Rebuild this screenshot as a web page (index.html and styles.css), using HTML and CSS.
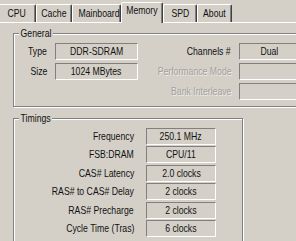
FILE: index.html
```html
<!DOCTYPE html>
<html lang="en">
<head>
  <meta charset="UTF-8">
  <title>CPU-Z Memory</title>
  <link rel="stylesheet" href="styles.css">
</head>
<body>
  <div class="window">
    <div class="tabs">
      <div class="tab tab-cpu"><span class="t">CPU</span></div>
      <div class="tab tab-cache"><span class="t">Cache</span></div>
      <div class="tab tab-mainboard"><span class="t">Mainboard</span></div>
      <div class="tab tab-memory active"><span class="t">Memory</span></div>
      <div class="tab tab-spd"><span class="t">SPD</span></div>
      <div class="tab tab-about"><span class="t">About</span></div>
    </div>

    <div class="page">
      <div class="group general">
        <span class="group-title"><span class="t">General</span></span>
        <div class="general-grid">
          <span class="label"><span class="t">Type</span></span>
          <span class="field"><span class="t">DDR-SDRAM</span></span>
          <span class="label"><span class="t">Channels #</span></span>
          <span class="field"><span class="t">Dual</span></span>

          <span class="label"><span class="t">Size</span></span>
          <span class="field"><span class="t">1024 MBytes</span></span>
          <span class="label disabled"><span class="t">Performance Mode</span></span>
          <span class="field"></span>

          <span></span>
          <span></span>
          <span class="label disabled"><span class="t">Bank Interleave</span></span>
          <span class="field"></span>
        </div>
      </div>

      <div class="group timings">
        <span class="group-title"><span class="t">Timings</span></span>
        <div class="timings-grid">
          <span class="label"><span class="t">Frequency</span></span>
          <span class="field"><span class="t">250.1 MHz</span></span>
          <span class="label"><span class="t">FSB:DRAM</span></span>
          <span class="field"><span class="t">CPU/11</span></span>
          <span class="label"><span class="t">CAS# Latency</span></span>
          <span class="field"><span class="t">2.0 clocks</span></span>
          <span class="label"><span class="t">RAS# to CAS# Delay</span></span>
          <span class="field"><span class="t">2 clocks</span></span>
          <span class="label"><span class="t">RAS# Precharge</span></span>
          <span class="field"><span class="t">2 clocks</span></span>
          <span class="label"><span class="t">Cycle Time (Tras)</span></span>
          <span class="field"><span class="t">6 clocks</span></span>
        </div>
      </div>
    </div>
  </div>
</body>
</html>
```

FILE: styles.css
```css
:root {
  --face: #d4d0c8;
  --shadow: #808080;
  --dark: #404040;
  --light: #ffffff;
  --text: #111111;
  --disabled: #a3a09a;
}

* {
  box-sizing: border-box;
  margin: 0;
  padding: 0;
}

body {
  background-color: var(--face);
  color: var(--text);
  font-family: "Liberation Sans", Arial, sans-serif;
  font-size: 11px;
}

.window {
  width: 296px;
  height: 241px;
  overflow: hidden;
}

/* narrow the old dialog font */
.t {
  display: inline-block;
  transform: scaleX(0.79);
  transform-origin: center;
}

/* tab strip */
.tabs {
  display: flex;
  align-items: flex-end;
  height: 23px;
  border-bottom: 1px solid var(--light);
}

.tab {
  flex-shrink: 0;
  height: 18px;
  line-height: 16px;
  text-align: center;
  white-space: nowrap;
  border-top: 1px solid var(--light);
  border-left: 1px solid var(--light);
  border-right: 1px solid var(--dark);
  border-radius: 2px 2px 0 0;
  box-shadow: inset -1px 0 var(--shadow);
}

.tab-cpu { width: 39px; margin-left: -3px; }
.tab-cache { width: 36px; }
.tab-mainboard { width: 49px; }
.tab-memory { width: 42px; }
.tab-spd { width: 34px; }
.tab-about { width: 35px; }

.tab.active {
  height: 21px;
  line-height: 15px;
  margin-bottom: -1px;
  background-color: var(--face);
}

/* group boxes */
.page {
  padding-left: 13px;
}

.group {
  position: relative;
  border: 1px solid var(--shadow);
  box-shadow: inset 1px 1px var(--light), 1px 1px var(--light);
}

.group-title {
  position: absolute;
  top: -7px;
  left: 5px;
  line-height: 13px;
}

.group-title .t {
  padding: 0 2px;
  background-color: var(--face);
  transform-origin: left center;
}

.general {
  margin-top: 10px;
  width: 300px;
  height: 74px;
  padding-top: 9px;
}

.general-grid {
  display: grid;
  grid-template-columns: 41px 83px 101px 60px;
  grid-auto-rows: 17px;
  row-gap: 3px;
}

.timings {
  margin-top: 11px;
  width: 230px;
  height: 130px;
  padding-top: 9px;
}

.timings-grid {
  display: grid;
  grid-template-columns: 132px 70px;
  grid-auto-rows: 17px;
  row-gap: 1.4px;
}

.label {
  text-align: right;
  line-height: 17px;
  white-space: nowrap;
}

.label .t {
  transform-origin: right center;
}

.general-grid .label { padding-right: 8px; }
.timings-grid .label { padding-right: 12px; }

.label.disabled {
  color: var(--disabled);
  text-shadow: 1px 1px 0 rgba(255, 255, 255, 0.6);
}

.field {
  text-align: center;
  line-height: 15px;
  white-space: nowrap;
  border-top: 1px solid var(--shadow);
  border-left: 1px solid var(--shadow);
  border-bottom: 1px solid var(--light);
  border-right: 1px solid var(--light);
}
```
